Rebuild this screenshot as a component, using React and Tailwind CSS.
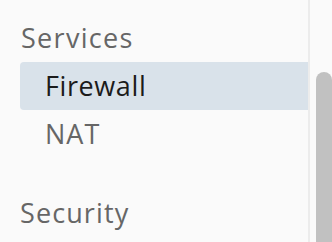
export default function App() {
  return (
    <div className="flex h-[242px] w-[332px] overflow-hidden bg-[#fafafa] font-['Open_Sans',sans-serif] tracking-[0.8px]">
      {/* Sidebar nav */}
      <nav className="flex w-[310px] shrink-0 flex-col border-r-2 border-[#ececec] pl-[20px] pt-[14px]">
        <div className="pl-[1px] text-[27px] font-medium leading-[48px] tracking-[1.3px] text-[#666666]">Services</div>
        <div className="rounded-l-[4px] bg-[#d9e2ea] pl-[25px] text-[27px] leading-[48px] tracking-[0.6px] text-[#1b1b1b]">
          Firewall
        </div>
        <div className="pl-[25px] text-[27px] leading-[48px] tracking-[1px] text-[#666666]">NAT</div>
        <div className="mt-[31px] text-[27px] font-medium leading-[48px] tracking-[1.1px] text-[#666666]">Security</div>
      </nav>

      {/* Scrollbar */}
      <div className="flex flex-1 flex-col pl-[6px] pt-[72px]">
        <div className="w-[16px] flex-1 rounded-t-full bg-[#c1c1c1]" />
      </div>
    </div>
  )
}
